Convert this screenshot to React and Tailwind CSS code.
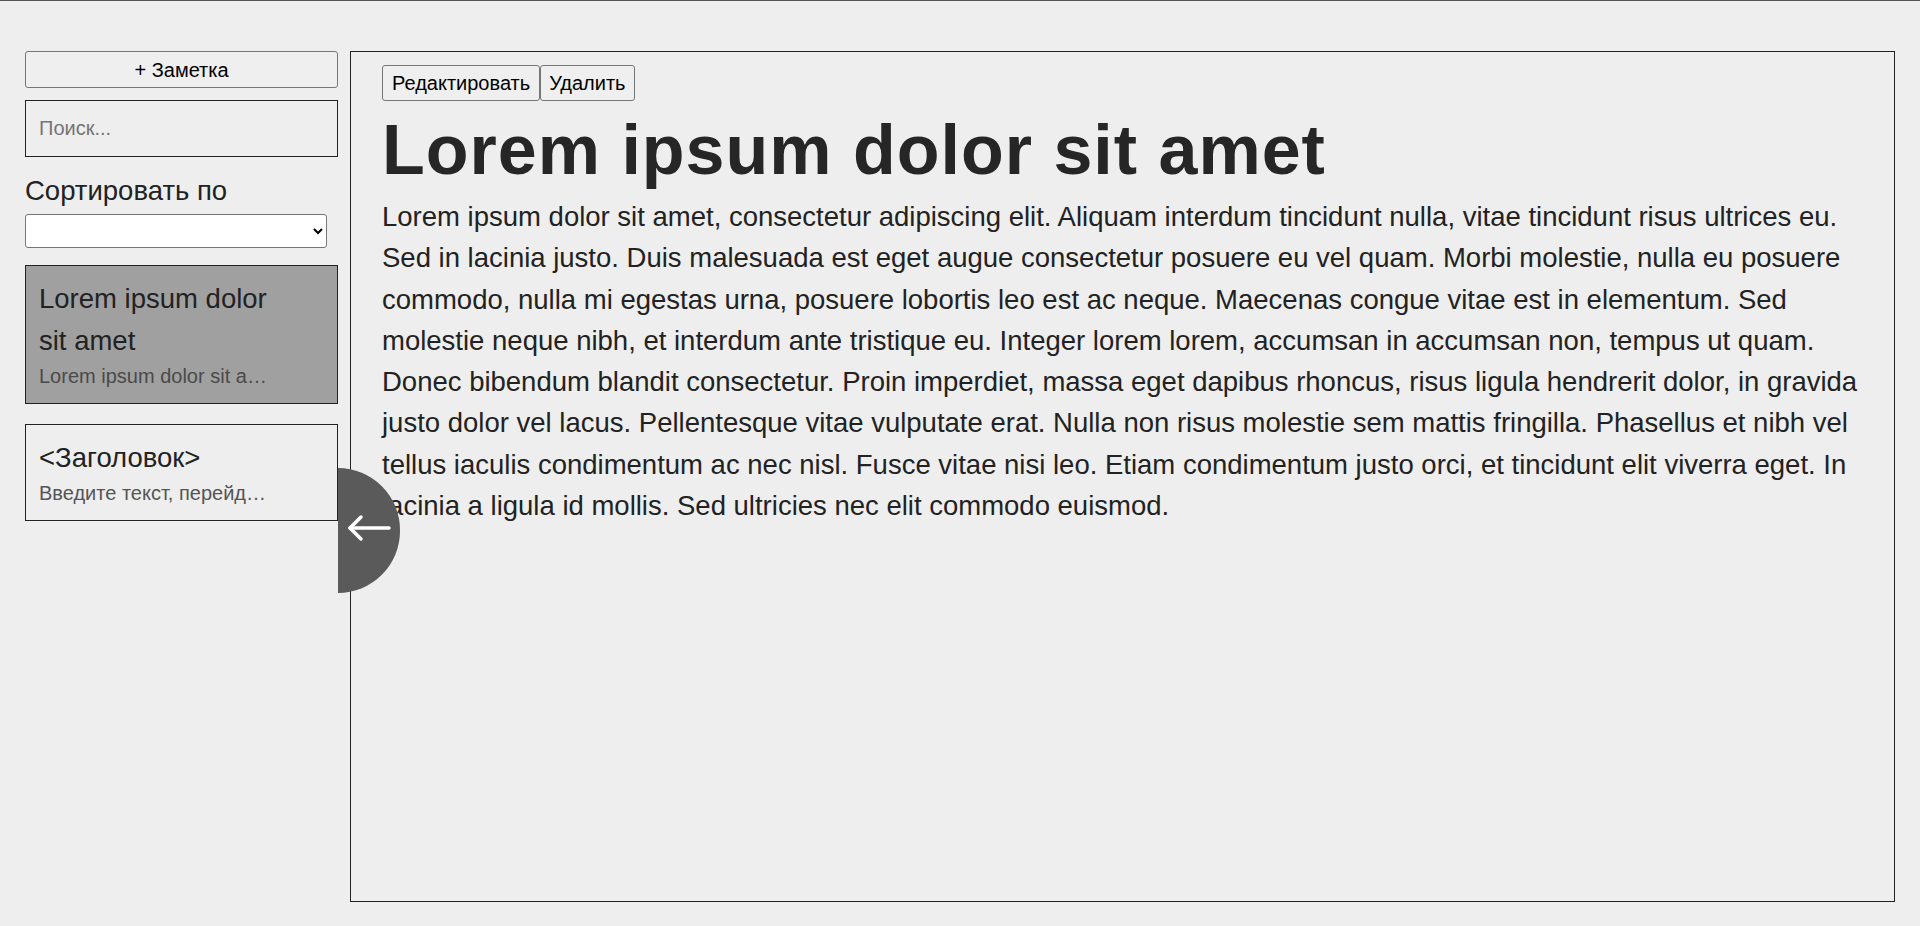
import React from 'react';

const NOTE_TEXT =
  'Lorem ipsum dolor sit amet, consectetur adipiscing elit. Aliquam interdum tincidunt nulla, vitae tincidunt risus ultrices eu. Sed in lacinia justo. Duis malesuada est eget augue consectetur posuere eu vel quam. Morbi molestie, nulla eu posuere commodo, nulla mi egestas urna, posuere lobortis leo est ac neque. Maecenas congue vitae est in elementum. Sed molestie neque nibh, et interdum ante tristique eu. Integer lorem lorem, accumsan in accumsan non, tempus ut quam. Donec bibendum blandit consectetur. Proin imperdiet, massa eget dapibus rhoncus, risus ligula hendrerit dolor, in gravida justo dolor vel lacus. Pellentesque vitae vulputate erat. Nulla non risus molestie sem mattis fringilla. Phasellus et nibh vel tellus iaculis condimentum ac nec nisl. Fusce vitae nisi leo. Etiam condimentum justo orci, et tincidunt elit viverra eget. In lacinia a ligula id mollis. Sed ultricies nec elit commodo euismod.';

const notes = [
  { id: 1, title: 'Lorem ipsum dolor sit amet', preview: NOTE_TEXT, active: true },
  { id: 2, title: '<Заголовок>', preview: 'Введите текст, перейдя в режим редактирования', active: false },
];

// Note card in the sidebar list
const NoteCard = ({ note, className }) => (
  <div
    className={`border border-[#222] px-[13px] py-[12px] ${
      note.active ? 'bg-[#a0a0a0]' : ''
    } ${className}`}
  >
    <div className="w-[232px] text-[27.5px] leading-[41.25px] text-[#222]">{note.title}</div>
    <div
      className={`w-[232px] truncate text-[20px] leading-[30px] ${
        note.active ? 'text-[#4a4a4a]' : 'text-[#555]'
      }`}
    >
      {note.preview}
    </div>
  </div>
);

function App() {
  return (
    <div className="relative h-[926px] overflow-hidden border-t border-[#555] bg-[#eeeeee] font-['Liberation_Sans',Arial,sans-serif] text-[#222]">
      <div className="flex items-start gap-[12px] px-[25px] pt-[50px]">
        {/* Sidebar */}
        <aside className="flex w-[313px] shrink-0 flex-col">
          <button className="h-[37px] w-full rounded-[3px] border border-[#767676] bg-[#efefef] text-[20px] leading-[34px] text-black">
            + Заметка
          </button>
          <input
            type="text"
            placeholder="Поиск..."
            className="mt-[12px] h-[57px] w-full border border-[#222] bg-transparent px-[13px] text-[20px] outline-none placeholder:text-[#757575]"
          />
          <label className="mt-[13px] text-[27.5px] leading-[41.25px]">Сортировать по</label>
          <select className="mt-[3px] h-[34px] w-[302px] rounded-[3px] border border-[#767676] bg-white text-[18px] text-black">
            <option></option>
            <option>Дате</option>
            <option>Названию</option>
          </select>

          <NoteCard note={notes[0]} className="mt-[17px]" />
          <NoteCard note={notes[1]} className="mt-[20px]" />
        </aside>

        {/* Note view */}
        <main className="h-[851px] flex-1 border border-[#222] px-[31px] pt-[13px]">
          <div className="flex">
            <button className="h-[36px] rounded-[3px] border border-[#767676] bg-[#efefef] px-[9px] text-[20px] text-black">
              Редактировать
            </button>
            <button className="h-[36px] rounded-[3px] border border-[#767676] bg-[#efefef] px-[8px] text-[20px] text-black">
              Удалить
            </button>
          </div>
          <h1 className="mt-[9px] text-[70px] font-bold leading-[80px] tracking-[1px] text-[#262626]">
            Lorem ipsum dolor sit amet
          </h1>
          <p className="mt-[6px] text-[27.5px] leading-[41.25px] text-[#222]">{NOTE_TEXT}</p>
        </main>
      </div>

      {/* Collapse sidebar toggle */}
      <button className="absolute left-[338px] top-[467px] flex h-[125px] w-[62px] items-center justify-center rounded-r-full bg-[#5a5a5a]">
        <svg className="mb-[5px]" width="44" height="28" viewBox="0 0 44 28" fill="none" stroke="white" strokeWidth="3.5" strokeLinecap="round" strokeLinejoin="round">
          <path d="M42 14H3" />
          <path d="M14 3L3 14l11 11" />
        </svg>
      </button>
    </div>
  );
}

export default App;
